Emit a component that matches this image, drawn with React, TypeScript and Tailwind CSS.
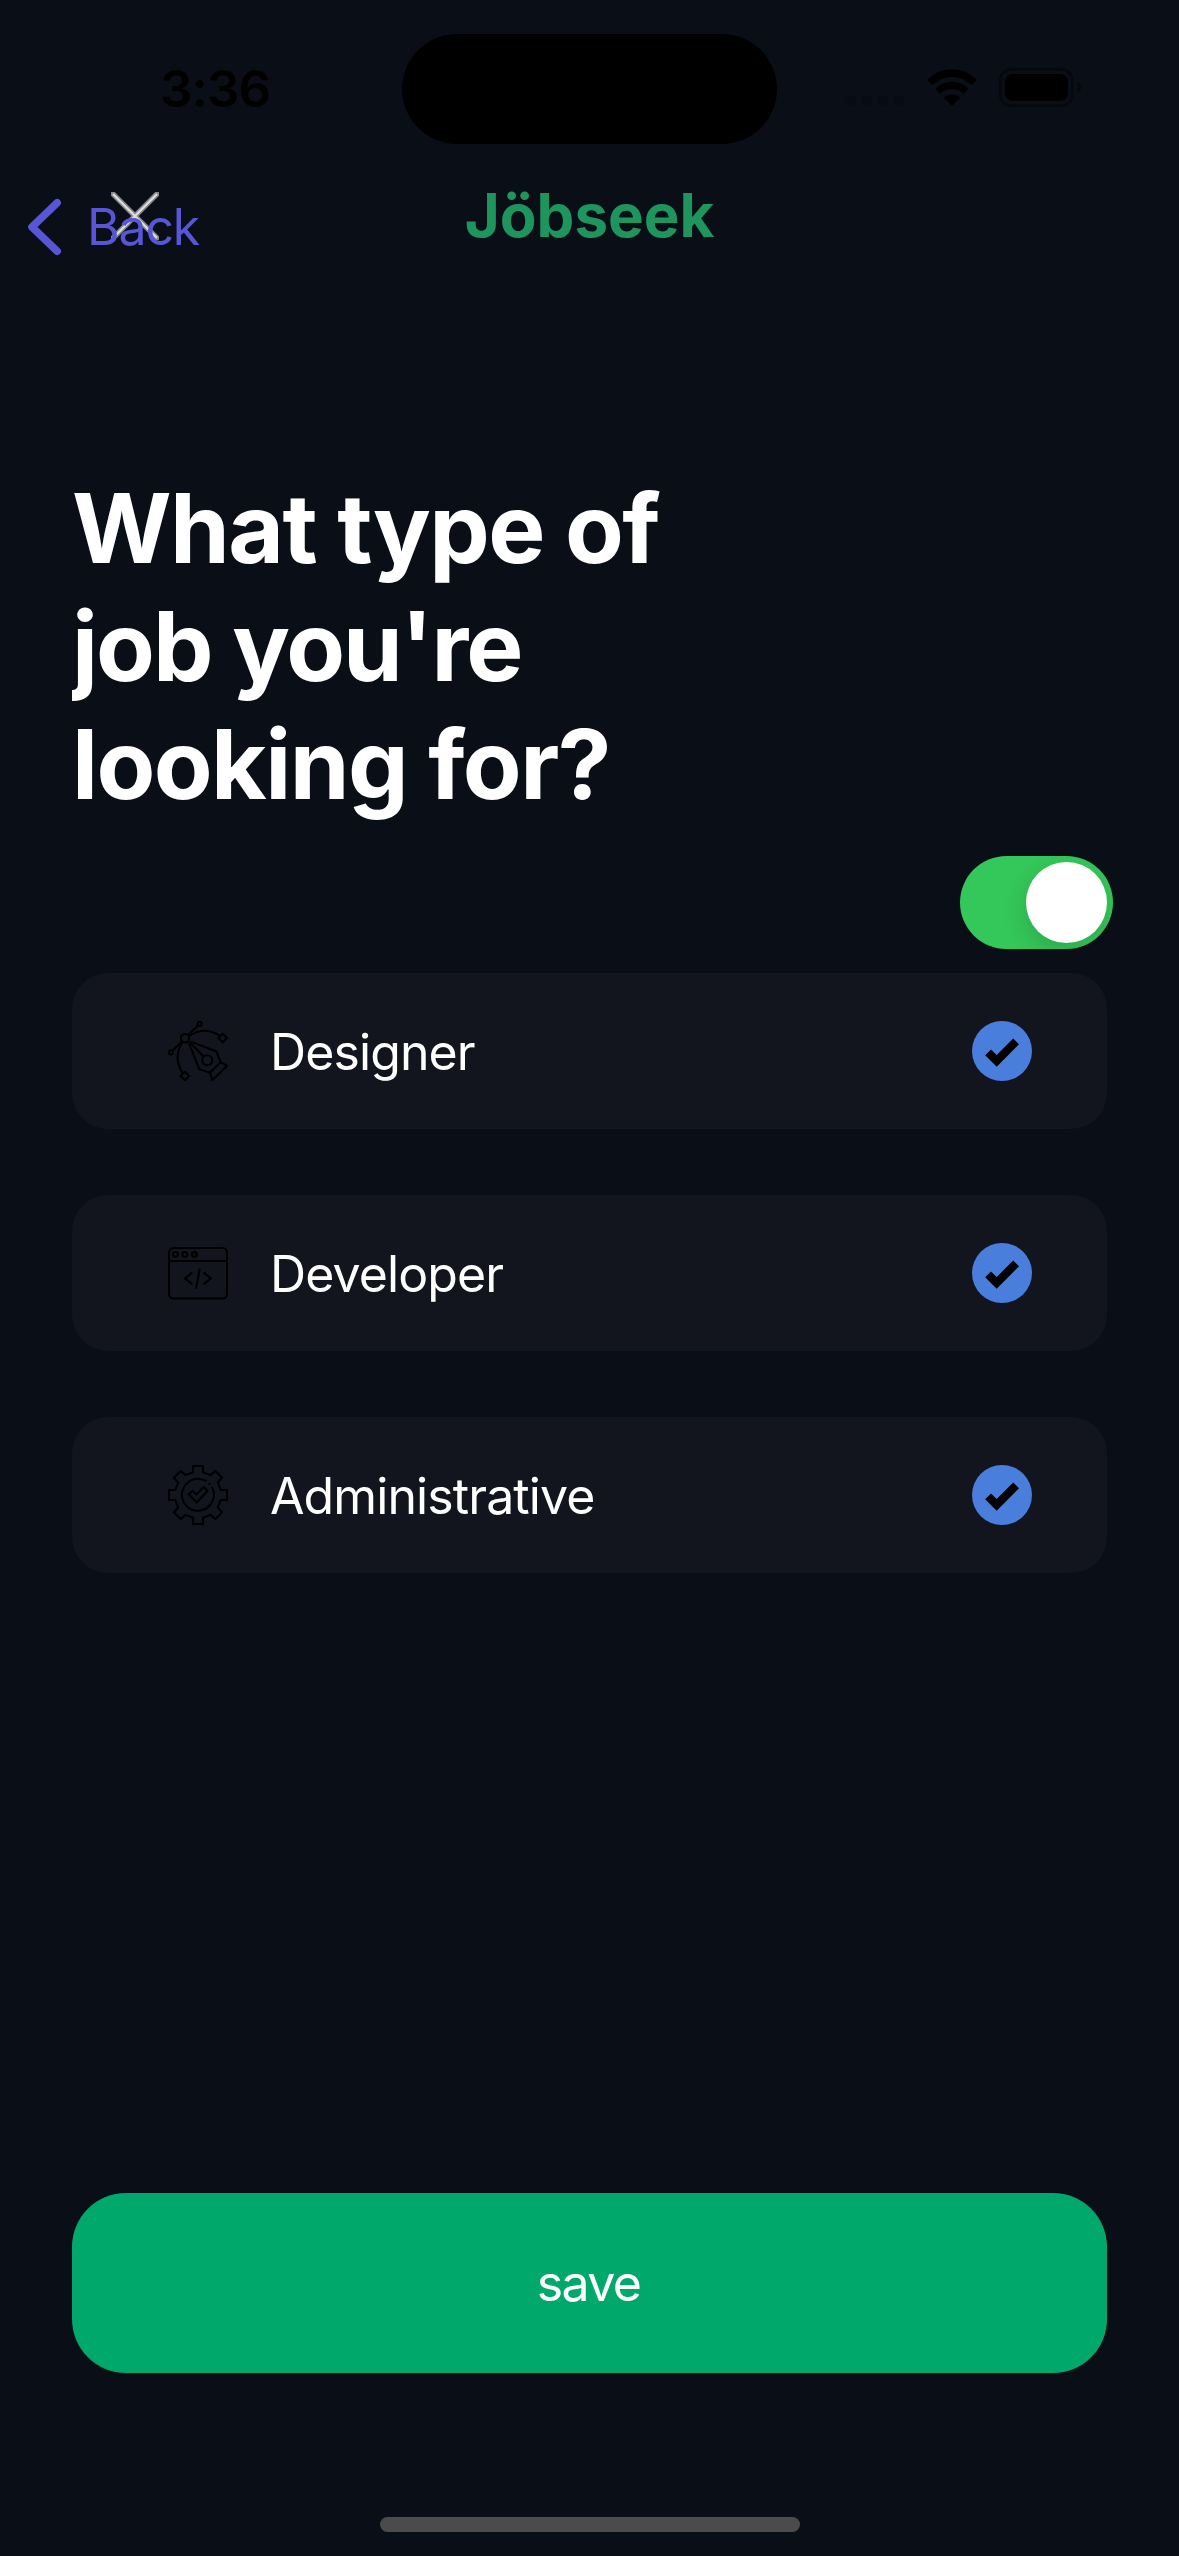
import type { ReactNode } from 'react';

function StatusBar() {
  return (
    <header className="flex h-[177px] shrink-0 items-start pt-[34px]">
      <div className="flex h-[110px] w-[402px] items-center pl-[160px] text-[51px] leading-[51px] font-semibold tracking-[-0.9px] text-black">
        <span className="mt-[-2px]">3:36</span>
      </div>
      <div className="h-[110px] w-[375px] rounded-full bg-black" />
      <div className="flex h-[110px] items-start pt-[34px] pl-[68px]">
        <svg className="h-[40px] w-[62px]" viewBox="0 0 62 40" fill="#080b13">
          <circle cx="6.5" cy="33" r="5.3" />
          <circle cx="22.5" cy="33" r="5.3" />
          <circle cx="38.5" cy="33" r="5.3" />
          <circle cx="54.5" cy="33" r="5.3" />
        </svg>
        <svg className="mt-[1px] ml-[20px] h-[37px] w-[50px]" viewBox="0 0 50.4 37" fill="#000">
          <path d="M0 11A34.4 34.4 0 0 1 50.4 11L45.1 16A28.7 28.7 0 0 0 5.3 16Z" />
          <path d="M8.3 19.7A23.9 23.9 0 0 1 42.1 19.7L36.9 25A16.2 16.2 0 0 0 13.5 25Z" />
          <path d="M17 29A11 11 0 0 1 33.4 29L25.2 37Z" />
        </svg>
        <svg className="ml-[22px] h-[39px] w-[82px]" viewBox="0 0 82 39">
          <rect x="1.3" y="1.3" width="72" height="36.4" rx="11" fill="none" stroke="#06080d" strokeWidth="2.6" />
          <rect x="6" y="6" width="63" height="27" rx="7.5" fill="#000" />
          <path d="M78 13.5Q82 15.5 82 19.5T78 25.5Z" fill="#06080d" />
        </svg>
      </div>
    </header>
  );
}

function NavBar() {
  return (
    <nav className="relative flex h-[100px] shrink-0 items-center pl-[27px]">
      <svg className="absolute top-[15px] left-[111px] h-[48px] w-[48px]" viewBox="0 0 48 48" fill="none">
        <path d="M0 0L48 48M48 0L0 48" stroke="#85878b" strokeWidth="5.4" />
        <path d="M2 2L46 46M46 2L2 46" stroke="#dededf" strokeWidth="2.2" />
      </svg>
      <button className="relative flex items-center text-[50px] leading-[60px] tracking-[-1.2px] text-[#5856d6]">
        <svg className="h-[58px] w-[36px]" viewBox="0 0 36 58" fill="none" stroke="#5856d6" strokeWidth="7.6" strokeLinecap="round" strokeLinejoin="round">
          <path d="M30.2 4.8L5 29L30.2 53.2" />
        </svg>
        <span className="ml-[24px]">Back</span>
      </button>
      <h2 className="absolute inset-x-0 top-[8px] text-center text-[60px] leading-[60px] font-bold text-[#1d955d]">Jöbseek</h2>
    </nav>
  );
}

const iconClass = 'h-[60px] w-[60px] shrink-0';

function PenToolIcon() {
  return (
    <svg className={iconClass} viewBox="0 0 60 60" fill="none" stroke="#000" strokeWidth="2">
      <circle cx="17" cy="17.3" r="4.2" />
      <circle cx="31.7" cy="2.9" r="2.1" />
      <circle cx="2.9" cy="31.4" r="2.1" />
      <path d="M30 4.5L20 14.3M14 20.3L4.6 29.7" />
      <path d="M54.7 12.7L59 17L54.7 21.3L50.4 17ZM17 50.7L21.3 55L17 59.3L12.7 55Z" />
      <path d="M21 15.2Q36 4.5 52 14.7M14.6 21Q4.5 36 14.6 52" />
      <path d="M21.3 23.2Q21.5 20.7 23.8 20.9L48.5 30.6L52.7 41.3L42 51.7L31.3 48.3Z" />
      <path d="M52.7 41.3L59.2 44.6L44.4 59.2L42 51.7" />
      <circle cx="39.3" cy="39.3" r="5" />
      <path d="M22.7 22.4L35.8 35.8" />
    </svg>
  );
}

function CodeWindowIcon() {
  return (
    <svg className={iconClass} viewBox="0 0 60 60" fill="none" stroke="#000" strokeWidth="2">
      <rect x="1" y="5" width="58" height="50.6" rx="4.5" />
      <path d="M1 18H59" />
      <circle cx="7.4" cy="11.4" r="2.4" />
      <circle cx="16.8" cy="11.4" r="2.4" />
      <circle cx="26.4" cy="11.4" r="2.4" />
      <path d="M24.3 29.5L17 35.4L24.3 41.3M35.5 29.5L43 35.4L35.5 41.3M31.8 25.5L28 45.7" />
    </svg>
  );
}

function GearCheckIcon() {
  return (
    <svg className={iconClass} viewBox="0 0 60 60" fill="none" stroke="#000" strokeWidth="2">
      <path d="M25 1H35V7.2L42.5 10.2L47.2 5.9L54.1 12.8L49.8 17.5L52.8 25H59V35H52.8L49.8 42.5L54.1 47.2L47.2 54.1L42.5 49.8L35 52.8V59H25V52.8L17.5 49.8L12.8 54.1L5.9 47.2L10.2 42.5L7.2 35H1V25H7.2L10.2 17.5L5.9 12.8L12.8 5.9L17.5 10.2L25 7.2Z" />
      <path d="M38.4 16.2A16 16 0 1 0 43.9 22" />
      <path d="M40.6 18.4L42.2 19.4" />
      <path d="M20.8 29.4L24.4 25.8L28.4 29.4L35.8 21.9L39.5 25.9L28.6 37.4Z" />
    </svg>
  );
}

function JobOption({ icon, label }: { icon: ReactNode; label: string }) {
  return (
    <li className="flex h-[156px] items-center rounded-[36px] bg-[#12151d] pr-[75px] pl-[96px]">
      {icon}
      <span className="mt-[2px] ml-[42px] grow text-[50px] leading-[60px] tracking-[-0.9px]">{label}</span>
      <svg className="h-[60px] w-[60px]" viewBox="0 0 60 60">
        <circle cx="30" cy="30" r="30" fill="#4a7edc" />
        <path d="M13.2 34.2L19 28.4L24.7 34L41.2 17.5L47 23.3L24.7 45.7Z" fill="#000" />
      </svg>
    </li>
  );
}

export default function App() {
  return (
    <div className="flex h-[2556px] w-[1179px] flex-col overflow-hidden bg-[#0a0f17] font-[Inter,sans-serif] text-white">
      <StatusBar />
      <NavBar />
      <main className="flex grow flex-col px-[72px] pt-[192px]">
        <h1 className="w-[640px] overflow-hidden text-[96px] leading-[118px] font-bold">
          <span className="block tracking-[-1.55px]">What type of</span>
          <span className="block tracking-[-2px]">job you're</span>
          <span className="block tracking-[-1.55px]">looking for?</span>
        </h1>
        <button className="mt-[33px] mr-[-6px] flex h-[93px] w-[153px] items-center justify-end self-end overflow-hidden rounded-full bg-[#34c759] pr-[6px]" role="switch" aria-checked="true">
          <span className="h-[81px] w-[81px] rounded-full bg-white shadow-[0_9px_24px_rgba(0,0,0,0.15)]" />
        </button>
        <ul className="mt-[24px] flex flex-col gap-[66px]">
          <JobOption icon={<PenToolIcon />} label="Designer" />
          <JobOption icon={<CodeWindowIcon />} label="Developer" />
          <JobOption icon={<GearCheckIcon />} label="Administrative" />
        </ul>
        <button className="mt-auto h-[180px] rounded-[54px] bg-[#00a96b] pr-[2px] text-[50px] leading-[60px] tracking-[-1.6px]">save</button>
      </main>
      <footer className="flex h-[183px] shrink-0 items-end justify-center pb-[24px]">
        <div className="h-[15px] w-[420px] rounded-full bg-[#4b4b4b]" />
      </footer>
    </div>
  );
}
